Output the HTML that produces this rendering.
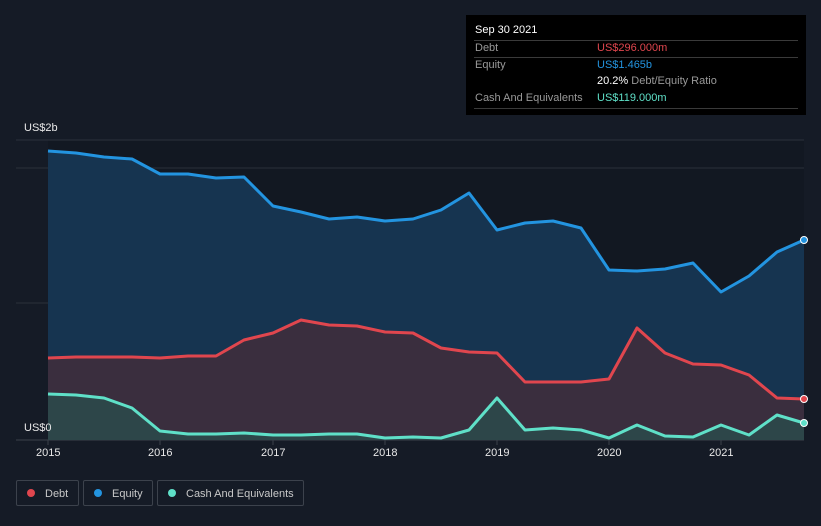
<!DOCTYPE html><html><head><style>
body{margin:0;width:821px;height:526px;background:#151b26;font-family:"Liberation Sans",sans-serif;overflow:hidden;position:relative}
.t{position:absolute;font-size:11px;color:#e8e8e8}
.tip{position:absolute;left:466px;top:15px;width:340px;height:100px;background:#000;}
.tip div{position:absolute;font-size:11px}
.ln{position:absolute;left:8px;width:324px;height:1px;background:#3a3a3a}
.leg{position:absolute;top:480px;height:26px;border:1px solid #3c424c;border-radius:2px;color:#c8c8c8;font-size:11px;line-height:26px;box-sizing:border-box}
.dot{display:inline-block;width:8px;height:8px;border-radius:50%;margin:0 10px 0 10px;vertical-align:-0px}
</style></head><body>
<svg width="821" height="526" style="position:absolute;left:0;top:0">
<rect x="48" y="140" width="756" height="300" fill="#121822"/>
<line x1="16" y1="140" x2="804" y2="140" stroke="#2c323c"/>
<line x1="16" y1="168" x2="804" y2="168" stroke="#2a303a"/>
<line x1="16" y1="303" x2="804" y2="303" stroke="#2a303a"/>
<line x1="16" y1="440" x2="804" y2="440" stroke="#3a404a"/>
<g stroke="#3a404a"><line x1="48" y1="440" x2="48" y2="445"/><line x1="160" y1="440" x2="160" y2="445"/><line x1="273" y1="440" x2="273" y2="445"/><line x1="385" y1="440" x2="385" y2="445"/><line x1="497" y1="440" x2="497" y2="445"/><line x1="609" y1="440" x2="609" y2="445"/><line x1="721" y1="440" x2="721" y2="445"/></g>
<polygon fill="#163450" points="48,151 76,153 104,157 132,159 160,174 188,174 216,178 244,177 273,206 301,212 329,219 357,217 385,221 413,219 441,210 469,193 497,230 525,223 553,221 581,228 609,270 637,271 665,269 693,263 721,292 749,276 777,252 804,240 804,440 48,440"/>
<polygon fill="#3a2e3e" points="48,358 76,357 104,357 132,357 160,358 188,356 216,356 244,340 273,333 301,320 329,325 357,326 385,332 413,333 441,348 469,352 497,353 525,382 553,382 581,382 609,379 637,328 665,353 693,364 721,365 749,375 777,398 804,399 804,440 48,440"/>
<polygon fill="#2d4649" points="48,394 76,395 104,398 132,408 160,431 188,434 216,434 244,433 273,435 301,435 329,434 357,434 385,438 413,437 441,438 469,430 497,398 525,430 553,428 581,430 609,438 637,425 665,436 693,437 721,425 749,435 777,415 804,423 804,440 48,440"/>
<g fill="none" stroke-width="3" stroke-linejoin="round">
<polyline stroke="#2394e0" points="48,151 76,153 104,157 132,159 160,174 188,174 216,178 244,177 273,206 301,212 329,219 357,217 385,221 413,219 441,210 469,193 497,230 525,223 553,221 581,228 609,270 637,271 665,269 693,263 721,292 749,276 777,252 804,240"/>
<polyline stroke="#e0464e" points="48,358 76,357 104,357 132,357 160,358 188,356 216,356 244,340 273,333 301,320 329,325 357,326 385,332 413,333 441,348 469,352 497,353 525,382 553,382 581,382 609,379 637,328 665,353 693,364 721,365 749,375 777,398 804,399"/>
<polyline stroke="#5fe0c8" points="48,394 76,395 104,398 132,408 160,431 188,434 216,434 244,433 273,435 301,435 329,434 357,434 385,438 413,437 441,438 469,430 497,398 525,430 553,428 581,430 609,438 637,425 665,436 693,437 721,425 749,435 777,415 804,423"/>
</g>
<circle cx="804" cy="240" r="3.5" fill="#2394e0" stroke="#fff"/>
<circle cx="804" cy="399" r="3.5" fill="#e0464e" stroke="#fff"/>
<circle cx="804" cy="423" r="3.5" fill="#5fe0c8" stroke="#fff"/>
</svg>
<div class="t" style="left:24px;top:122px">US$2b</div>
<div class="t" style="left:24px;top:422px">US$0</div>
<div class="t" style="left:36px;top:447px">2015</div>
<div class="t" style="left:148px;top:447px">2016</div>
<div class="t" style="left:261px;top:447px">2017</div>
<div class="t" style="left:373px;top:447px">2018</div>
<div class="t" style="left:485px;top:447px">2019</div>
<div class="t" style="left:597px;top:447px">2020</div>
<div class="t" style="left:709px;top:447px">2021</div>
<div class="tip">
<div style="left:9px;top:9px;color:#fff">Sep 30 2021</div>
<div class="ln" style="top:25px"></div>
<div style="left:9px;top:27px;color:#999">Debt</div><div style="left:131px;top:27px;color:#e0464e">US$296.000m</div>
<div class="ln" style="top:42px"></div>
<div style="left:9px;top:44px;color:#999">Equity</div><div style="left:131px;top:44px;color:#2394e0">US$1.465b</div>
<div style="left:131px;top:60px;color:#999"><b style="color:#fff;font-weight:normal">20.2%</b> Debt/Equity Ratio</div>
<div style="left:9px;top:77px;color:#999">Cash And Equivalents</div><div style="left:131px;top:77px;color:#5fe0c8">US$119.000m</div>
<div class="ln" style="top:93px"></div>
</div>
<div class="leg" style="left:16px;width:63px"><span class="dot" style="background:#e0464e"></span>Debt</div>
<div class="leg" style="left:83px;width:70px"><span class="dot" style="background:#2394e0"></span>Equity</div>
<div class="leg" style="left:157px;width:147px"><span class="dot" style="background:#5fe0c8"></span>Cash And Equivalents</div>
</body></html>
